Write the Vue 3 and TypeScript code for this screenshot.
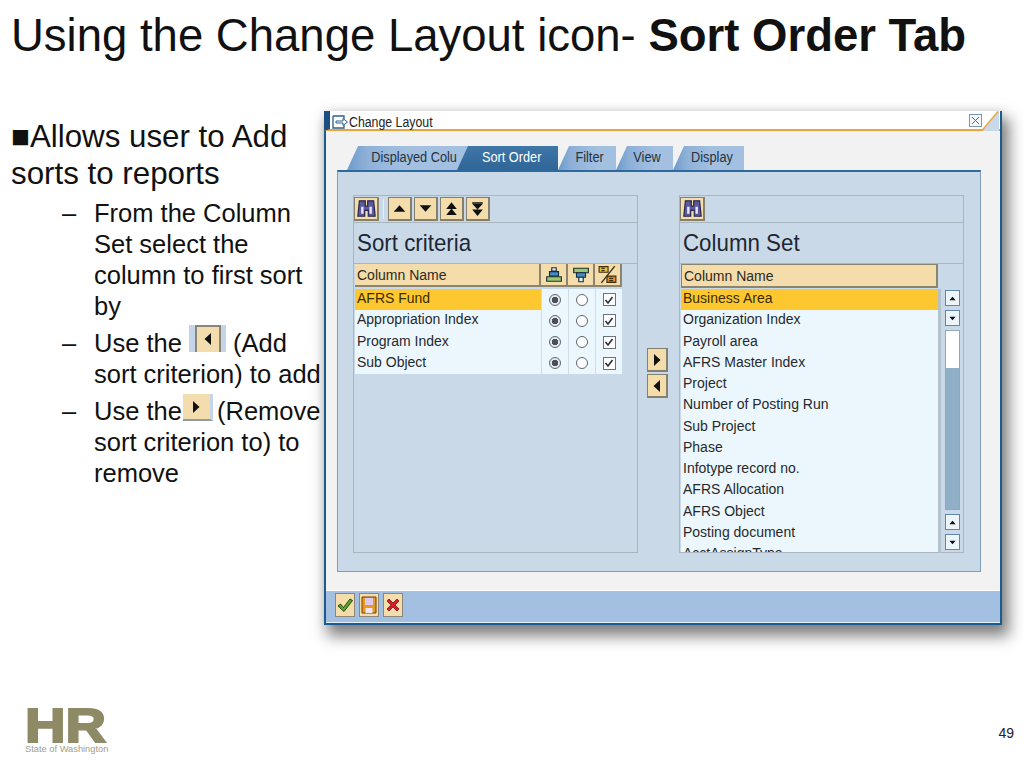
<script setup lang="ts">
const tabs = [
  { label: 'Displayed Colu', width: 122, active: false },
  { label: 'Sort Order', width: 101, active: true },
  { label: 'Filter', width: 58, active: false },
  { label: 'View', width: 57, active: false },
  { label: 'Display', width: 71, active: false }
]
const sortRows = ['AFRS Fund', 'Appropriation Index', 'Program Index', 'Sub Object']
const columnRows = [
  'Business Area',
  'Organization Index',
  'Payroll area',
  'AFRS Master Index',
  'Project',
  'Number of Posting Run',
  'Sub Project',
  'Phase',
  'Infotype record no.',
  'AFRS Allocation',
  'AFRS Object',
  'Posting document',
  'AcctAssignType'
]
</script>

<template>
  <div class="slide">
    <svg class="defs" width="0" height="0">
      <symbol id="binoculars" viewBox="0 0 16 16">
        <path d="M2 1.500h5V6h2V1.500h5l1.300 13H9.500V9.500h-3v5H.700z" fill="#5a5a9c" stroke="#26264e" stroke-width="1" />
        <path d="M3.500 6.500h2v6h-2zM10.500 6.500h2v6h-2z" fill="#e8e4f4" />
      </symbol>
      <symbol id="up" viewBox="0 0 16 16"><path d="M2.500 11 8 5l5.500 6z" fill="#111" /></symbol>
      <symbol id="down" viewBox="0 0 16 16"><path d="M2.500 5 8 11l5.500-6z" fill="#111" /></symbol>
      <symbol id="first" viewBox="0 0 16 16">
        <path d="M3 8.500 8 2l5 6.500zM3 14l5-6 5 6z" fill="#111" />
      </symbol>
      <symbol id="last" viewBox="0 0 16 16">
        <path d="M3 2h10v1.200H3zM3 3.500h10L8 9zM3 9l5 0 5 0-5 6z" fill="#111" />
      </symbol>
      <symbol id="left" viewBox="0 0 16 16"><path d="M11 2v12L4.500 8z" fill="#111" /></symbol>
      <symbol id="right" viewBox="0 0 16 16"><path d="M5 2v12l6.500-6z" fill="#111" /></symbol>
    </svg>

    <h1 class="title">Using the Change Layout icon- <b>Sort Order Tab</b></h1>

    <div class="main">
      <div class="notes">
        <p class="lead">■Allows user to Add<br />sorts to reports</p>
        <div class="sub">
          <span class="dash">–</span>
          <span>From the Column<br />Set select the<br />column to first sort<br />by</span>
        </div>
        <div class="sub">
          <span class="dash">–</span>
          <span>Use the
            <span class="shot shot-add"><svg width="16" height="16"><use href="#left" /></svg></span>
            (Add<br />sort criterion) to add</span>
        </div>
        <div class="sub">
          <span class="dash">–</span>
          <span>Use the<span class="shot shot-remove"><svg width="16" height="16"><use href="#right" /></svg></span> (Remove<br />sort criterion to) to<br />remove</span>
        </div>
      </div>

      <div class="window">
        <div class="titlebar">
          <svg class="win-icon" width="16" height="14" viewBox="0 0 16 14">
            <path d="M1 1h11v3M1 1v12h11v-3" fill="none" stroke="#2c5f8f" stroke-width="1.300" />
            <path d="M4 6h7V3.500L15.500 7 11 10.500V8H4z" fill="#fff" stroke="#2c5f8f" stroke-width="1" />
          </svg>
          <span class="win-name">Change Layout</span>
          <span class="win-close">
            <svg width="9" height="9" viewBox="0 0 9 9"><path d="M1 1l7 7M8 1 1 8" stroke="#55687a" stroke-width="1" /></svg>
          </span>
          <svg class="win-corner" width="18" height="20" viewBox="0 0 18 20">
            <path d="M0 20 17 0v20z" fill="#c9d9e8" />
            <path d="M0 19.500 16 .500" stroke="#e9a93f" stroke-width="1.500" />
          </svg>
        </div>

        <div class="win-body">
          <div class="tabs">
            <div
              v-for="tab in tabs"
              :key="tab.label"
              class="tab"
              :class="{ active: tab.active }"
              :style="{ width: tab.width + 'px' }"
            ><span class="tab-label">{{ tab.label }}</span></div>
          </div>

          <div class="panel">
            <section class="group">
              <div class="group-tools">
                <button class="btn btn-find"><svg width="19" height="19"><use href="#binoculars" /></svg></button>
                <i class="tool-sep"></i>
                <button class="btn btn-move"><svg width="17" height="17"><use href="#up" /></svg></button>
                <button class="btn btn-move"><svg width="17" height="17"><use href="#down" /></svg></button>
                <button class="btn btn-move"><svg width="17" height="17"><use href="#first" /></svg></button>
                <button class="btn btn-move"><svg width="17" height="17"><use href="#last" /></svg></button>
              </div>
              <div class="group-title"><span>Sort criteria</span></div>
              <div class="sort-table">
                <div class="head-cell">Column Name</div>
                <div class="head-cell head-icon">
                  <svg width="18" height="18" viewBox="0 0 16 16">
                    <path d="M6 1.500h4v3H6z" fill="#dfe9f5" stroke="#1d2b3a" />
                    <path d="M4 5h8v4H4z" fill="#3f8fc4" stroke="#1d2b3a" />
                    <path d="M1.500 9.500h13v4h-13z" fill="#9cc86a" stroke="#1d2b3a" />
                  </svg>
                </div>
                <div class="head-cell head-icon">
                  <svg width="18" height="18" viewBox="0 0 16 16">
                    <path d="M1.500 2h13v4h-13z" fill="#9cc86a" stroke="#1d2b3a" />
                    <path d="M4 6h8v4H4z" fill="#3f8fc4" stroke="#1d2b3a" />
                    <path d="M6 10h4v4H6z" fill="#dfe9f5" stroke="#1d2b3a" />
                  </svg>
                </div>
                <div class="head-cell head-icon">
                  <svg width="19" height="19" viewBox="0 0 17 17">
                    <path d="M1 1.500h8v5H1z" fill="#e8c53a" stroke="#3a2d10" />
                    <path d="M8 10h8v5.500H8z" fill="#e98a1e" stroke="#3a2d10" />
                    <path d="M3 16 15 1" stroke="#3a2d10" stroke-width="1.200" />
                    <path d="M3 3h3M3 5h3M10 12h3.500M10 14h3.500" stroke="#3a2d10" />
                  </svg>
                </div>
                <template v-for="(row, i) in sortRows" :key="row">
                  <div class="row-name" :class="{ selected: i === 0 }">{{ row }}</div>
                  <div class="row-cell"><span class="radio on"></span></div>
                  <div class="row-cell"><span class="radio"></span></div>
                  <div class="row-cell">
                    <span class="check">
                      <svg width="10" height="10" viewBox="0 0 10 10"><path d="M1.500 5 4 8l4.500-6" fill="none" stroke="#2b2f36" stroke-width="1.600" /></svg>
                    </span>
                  </div>
                </template>
              </div>
            </section>

            <div class="transfer">
              <button class="btn btn-transfer"><svg width="16" height="16"><use href="#right" /></svg></button>
              <button class="btn btn-transfer"><svg width="16" height="16"><use href="#left" /></svg></button>
            </div>

            <section class="group">
              <div class="group-tools">
                <button class="btn btn-find"><svg width="19" height="19"><use href="#binoculars" /></svg></button>
              </div>
              <div class="group-title"><span>Column Set</span></div>
              <div class="column-table">
                <div class="column-main">
                  <div class="head-cell head-wide">Column Name</div>
                  <div class="column-list">
                    <div v-for="(row, i) in columnRows" :key="row" class="row-name" :class="{ selected: i === 0 }">{{ row }}</div>
                  </div>
                </div>
                <div class="scrollbar">
                  <span class="scroll-btn"><svg width="9" height="9" viewBox="0 0 16 16"><use href="#up" /></svg></span>
                  <span class="scroll-btn"><svg width="9" height="9" viewBox="0 0 16 16"><use href="#down" /></svg></span>
                  <div class="scroll-track"><div class="scroll-thumb"></div></div>
                  <span class="scroll-btn"><svg width="9" height="9" viewBox="0 0 16 16"><use href="#up" /></svg></span>
                  <span class="scroll-btn"><svg width="9" height="9" viewBox="0 0 16 16"><use href="#down" /></svg></span>
                </div>
              </div>
            </section>
          </div>
        </div>

        <div class="win-actions">
          <button class="btn btn-action">
            <svg width="18" height="18" viewBox="0 0 18 18"><path d="M2 10l2.500-2 3 3.500L14 3l2.500 1.500L8 15.500z" fill="#5fa52c" stroke="#234a12" /></svg>
          </button>
          <button class="btn btn-action">
            <svg width="18" height="20" viewBox="0 0 18 20">
              <path d="M2 2h14v16H2z" fill="#e79a1f" stroke="#6b4208" />
              <path d="M5 3h8v7H5z" fill="#dcc8ea" />
              <path d="M5.500 13h7v5h-7z" fill="#efe6f2" />
            </svg>
          </button>
          <button class="btn btn-action">
            <svg width="18" height="18" viewBox="0 0 18 18"><path d="M3 5l2-2 4 4 4-4 2 2-4 4 4 4-2 2-4-4-4 4-2-2 4-4z" fill="#d0202c" stroke="#7c1019" stroke-width=".8" /></svg>
          </button>
        </div>
      </div>
    </div>

    <div class="footer">
      <div class="logo">
        <div class="logo-mark">HR</div>
        <div class="logo-text">State of Washington</div>
      </div>
      <div class="page-no">49</div>
    </div>
  </div>
</template>

<style>
body {
  background: #fff;
}
</style>

<style scoped>
.slide {
  width: 1024px;
  height: 768px;
  overflow: hidden;
  display: flex;
  flex-direction: column;
  background: #fff;
  color: #111;
  font-family: "Liberation Sans", Arial, sans-serif;
}
.defs {
  position: absolute;
}
.title {
  margin: 0;
  height: 111px;
  padding: 11px 0 0 11px;
  box-sizing: border-box;
  font-size: 45.500px;
  line-height: 50px;
  font-weight: normal;
  white-space: nowrap;
}
.main {
  display: flex;
}
.notes {
  width: 324px;
  flex: none;
  padding: 7px 0 0 11px;
  box-sizing: border-box;
  white-space: nowrap;
}
.lead {
  margin: 0 0 6px;
  font-size: 31.300px;
  line-height: 37px;
}
.sub {
  display: flex;
  margin-bottom: 6px;
  font-size: 25.500px;
  line-height: 31px;
}
.dash {
  width: 83px;
  padding-left: 51px;
  box-sizing: border-box;
  flex: none;
}
.shot {
  display: inline-flex;
  align-items: center;
  justify-content: center;
  height: 27px;
  margin-top: -8px;
  box-sizing: border-box;
  vertical-align: 5.500px;
  background: #f3dcae;
}
.shot-add {
  width: 37px;
  border-left: 6px solid #c4d5e8;
  border-right: 5px solid #c4d5e8;
  box-shadow: inset 2px 2px 0 #8a8577, inset -2px 0 0 #8a8577;
}
.shot-remove {
  width: 30px;
  margin-left: 1px;
  margin-right: -3px;
  border-right: 3px solid #c4d5e8;
  border-bottom: 2px solid #8f9a9c;
}
.window {
  width: 678px;
  height: 514px;
  flex: none;
  box-sizing: border-box;
  display: flex;
  flex-direction: column;
  background: #f2f2f2;
  border: 2px solid #1b5c90;
  border-top: 0;
  box-shadow: 5px 9px 14px 2px rgba(0, 0, 0, 0.5), 0 -2px 8px rgba(0, 0, 0, 0.06);
}
.titlebar {
  position: relative;
  height: 20px;
  flex: none;
  box-sizing: border-box;
  display: flex;
  align-items: center;
  padding: 3px 0 0 2px;
  margin-left: -2px;
  background: #fff;
  border-left: 6px solid #1b4f80;
  border-bottom: 2px solid #eba43a;
  font-size: 14px;
  color: #222;
}
.win-icon {
  margin-right: 1px;
}
.win-name {
  display: inline-block;
  transform: scaleX(0.88);
  transform-origin: left center;
}
.win-close {
  position: absolute;
  right: 18px;
  top: 3px;
  width: 11px;
  height: 11px;
  display: flex;
  align-items: center;
  justify-content: center;
  border: 1px solid #7b97b3;
  background: #f4f8fb;
}
.win-corner {
  position: absolute;
  right: 0;
  top: 0;
}
.win-body {
  flex: 1;
  padding: 15px 19px 0 11px;
}
.tabs {
  display: flex;
  height: 24px;
  padding-left: 10px;
}
.tab {
  height: 24px;
  flex: none;
  display: flex;
  align-items: center;
  justify-content: center;
  padding: 0 0 3px 6px;
  box-sizing: border-box;
  clip-path: polygon(11px 0, 100% 0, 100% 100%, 0 100%);
  background: linear-gradient(90deg, #6d9bcb 0, #8fb1d8 14px, #a3c0e0 40px);
  font-size: 14px;
  color: #26323e;
}
.tab:first-child {
  margin-right: -12px;
  padding-left: 12px;
  background: linear-gradient(90deg, #6d9bcb 0, #8fb1d8 20px, #a3c0e0 60px);
}
.tab-label {
  display: inline-block;
  transform: scaleX(0.91);
  white-space: nowrap;
}
.tab.active {
  position: relative;
  z-index: 1;
  padding-left: 8px;
  background: linear-gradient(#3f77a8, #2f6597);
  color: #fff;
}
.panel {
  height: 402px;
  box-sizing: border-box;
  display: flex;
  padding: 23px 0 0 15px;
  background: #c9d9e8;
  border: 1px solid #7f9dba;
  border-top: 2px solid #2d6a9f;
}
.group {
  width: 285px;
  height: 358px;
  flex: none;
  box-sizing: border-box;
  border: 1px solid #a9b5bf;
}
.group-tools {
  height: 27px;
  box-sizing: border-box;
  display: flex;
  align-items: center;
  gap: 2px;
  border-bottom: 1px solid #a9b5bf;
}
.tool-sep {
  width: 1px;
  height: 20px;
  margin: 0 2px;
  background: #e6edf3;
}
.btn {
  display: flex;
  align-items: center;
  justify-content: center;
  padding: 0;
  box-sizing: border-box;
  background: #f4dcab;
  border: 1px solid #857f6e;
  border-right-width: 2px;
  border-bottom-width: 2px;
}
.btn-find {
  width: 25px;
  height: 24px;
}
.btn-move {
  width: 24px;
  height: 24px;
}
.group-title {
  height: 41px;
  box-sizing: border-box;
  padding-left: 3px;
  border-bottom: 1px solid #a9b5bf;
  font-size: 24px;
  line-height: 39px;
  color: #1c2733;
}
.group-title span {
  display: inline-block;
  transform: scaleX(0.93);
  transform-origin: left center;
}
.sort-table {
  display: grid;
  grid-template-columns: 186px 27px 27px 27px;
  grid-auto-rows: 21.250px;
  grid-template-rows: 25px;
  padding-left: 1px;
}
.head-cell {
  height: 23px;
  box-sizing: border-box;
  padding-left: 2px;
  background: #f4dcab;
  border: 1px solid #8a8470;
  border-width: 0 2px 2px 0;
  font-size: 14px;
  line-height: 22px;
  color: #2b2b24;
}
.head-icon {
  display: flex;
  align-items: center;
  justify-content: center;
  padding: 0;
}
.row-name {
  height: 21.250px;
  padding-left: 2px;
  box-sizing: border-box;
  background: #ecf7fd;
  font-size: 14px;
  line-height: 18px;
  color: #26292d;
  white-space: nowrap;
}
.row-name.selected {
  background: #fdc82f;
  color: #3a2c00;
}
.row-cell {
  display: flex;
  align-items: center;
  justify-content: center;
  background: #ecf7fd;
  border-left: 1px solid #cfdbe5;
}
.radio {
  width: 12px;
  height: 12px;
  box-sizing: border-box;
  border: 1px solid #5d6670;
  border-radius: 50%;
  background: #fff;
}
.radio.on {
  background: radial-gradient(circle, #4a5058 0 3px, #e4e8ec 3.500px);
}
.check {
  width: 13px;
  height: 13px;
  box-sizing: border-box;
  display: flex;
  align-items: center;
  justify-content: center;
  border: 1px solid #6a747e;
  background: #fff;
}
.transfer {
  width: 41px;
  flex: none;
  display: flex;
  flex-direction: column;
  align-items: center;
  gap: 2px;
  padding: 153px 2px 0 0;
  box-sizing: border-box;
}
.btn-transfer {
  width: 21px;
  height: 24px;
}
.column-table {
  display: flex;
  padding-left: 1px;
}
.column-main {
  width: 260px;
  flex: none;
}
.head-wide {
  width: 257px;
  height: 24px;
  margin-bottom: 1px;
  border-width: 1px 2px 2px 1px;
}
.column-list {
  width: 260px;
  height: 264px;
  overflow: hidden;
  box-sizing: border-box;
  border-right: 3px solid #b4c2ce;
  border-bottom: 1px solid #a9b5bf;
  background: #ecf7fd;
}
.scrollbar {
  width: 15px;
  margin: 26px 0 0 4px;
  display: flex;
  flex-direction: column;
  gap: 4px;
}
.scroll-btn {
  height: 16px;
  flex: none;
  box-sizing: border-box;
  display: flex;
  align-items: center;
  justify-content: center;
  background: #edf5fb;
  border: 1px solid #5f86ab;
}
.scroll-track {
  height: 180px;
  flex: none;
  box-sizing: border-box;
  background: #fff;
  border: 1px solid #8fa8bf;
  padding-top: 37px;
}
.scroll-thumb {
  height: 100%;
  background: #8fafc6;
}
.win-actions {
  height: 33px;
  margin-top: 17px;
  flex: none;
  display: flex;
  align-items: flex-start;
  gap: 4px;
  padding: 2px 0 0 9px;
  box-sizing: border-box;
  background: #a3bfe2;
  border-top: 1px solid #fff;
  border-bottom: 1px solid #e4f0f7;
}
.btn-action {
  width: 20px;
  height: 24px;
  border: 1px solid #8c877a;
}
.footer {
  flex: 1;
  display: flex;
  justify-content: space-between;
  align-items: flex-end;
  padding: 0 10px 14px 25px;
}
.logo {
  width: 84px;
  color: #8f8a66;
}
.logo-mark {
  height: 35px;
  font-size: 48px;
  font-weight: bold;
  line-height: 35px;
  white-space: nowrap;
  -webkit-text-stroke: 2px #8f8a66;
  transform: scaleX(1.170);
  transform-origin: left center;
}
.logo-text {
  margin-top: 1px;
  font-size: 9.300px;
  line-height: 10px;
  color: #a3a08a;
  white-space: nowrap;
}
.page-no {
  font-size: 14px;
  line-height: 16px;
  margin-bottom: 13px;
  color: #222;
}
</style>
